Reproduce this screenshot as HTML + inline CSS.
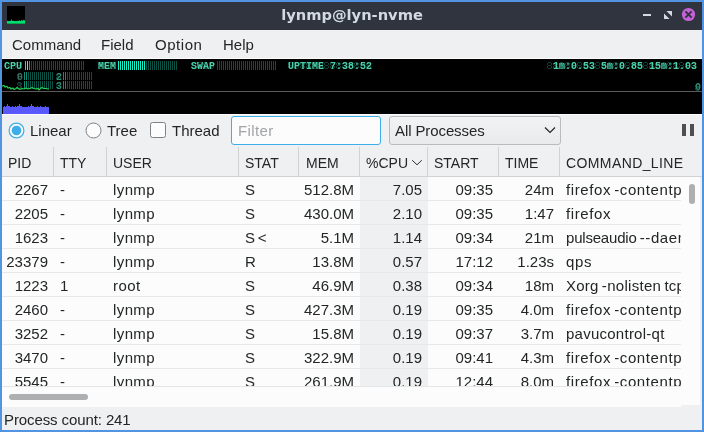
<!DOCTYPE html>
<html><head><meta charset="utf-8"><title>lynmp@lyn-nvme</title>
<style>
html,body{margin:0;padding:0}
body{width:704px;height:432px;overflow:hidden;position:relative;background:#5294e2;font-family:"Liberation Sans",sans-serif;font-size:15px;color:#232627}
.a{position:absolute;white-space:nowrap}
#win{will-change:transform;left:2px;top:2px;width:700px;height:428px;background:#eff0f1;overflow:hidden}
#tb{left:0;top:0;width:700px;height:28px;background:#2f343f}
#ttl{left:0;width:700px;top:3px;text-align:center;font-family:"DejaVu Sans",sans-serif;font-weight:bold;font-size:14.67px;color:#d3dae3;line-height:20px}
.m{top:33px;line-height:20px;font-size:15px}
#info{left:0;top:57px;width:700px;height:55px;background:#000}
.lcd{font-family:"Liberation Mono",monospace;font-size:10px;font-weight:bold;line-height:10px;color:#4ccfa9;white-space:pre}
.dim{color:#2b8c78}.d0{color:#3a6e62}.d1{color:#143a33}.b2{background:repeating-linear-gradient(90deg,#06312a 0 1px,transparent 1px 2px)}.bm{background:repeating-linear-gradient(90deg,#128a74 0 1px,transparent 1px 2px)}
.bars{height:9px;background:repeating-linear-gradient(90deg,#0b4f45 0 1px,transparent 1px 2px)}
.bb{height:9px;background:repeating-linear-gradient(90deg,#14efcb 0 1px,transparent 1px 2px)}
.seg{height:7px;--c:#0b4036;background:
linear-gradient(90deg,transparent 1px,var(--c) 1px 4px,transparent 4px) 0 0/6px 1px repeat-x,
linear-gradient(90deg,transparent 1px,var(--c) 1px 4px,transparent 4px) 0 3px/6px 1px repeat-x,
linear-gradient(90deg,transparent 1px,var(--c) 1px 4px,transparent 4px) 0 6px/6px 1px repeat-x,
linear-gradient(90deg,var(--c) 0 1px,transparent 1px 4px,var(--c) 4px 5px,transparent 5px) 0 1px/6px 2px repeat-x,
linear-gradient(90deg,var(--c) 0 1px,transparent 1px 4px,var(--c) 4px 5px,transparent 5px) 0 4px/6px 2px repeat-x}
.t{line-height:20px}
.hd{top:151px;line-height:20px;font-size:14px}
.sep{top:145px;width:1px;height:29px;background:#d1d2d3}
#body{left:0;top:175px;width:679px;height:209px;background:#fcfcfc;overflow:hidden}
.row{left:0;width:679px;height:23px;border-bottom:1px solid #e7e8e9}
.c{top:3px;line-height:20px}
.r{text-align:right}
</style></head><body>
<div id="win" class="a">
<div id="tb" class="a">
 <div class="a" style="left:5px;top:4px;width:18px;height:18px;background:#000"></div>
 <svg class="a" style="left:5px;top:4px" width="18" height="18" viewBox="0 0 18 18"><path d="M0 17.8V15L1 14.8L2 15.3L3 14.7L4 15L4.6 13L5.2 14.8L6 15.1L7 14.7L8 15.2L9 14.8L10 15.2L11 14.7L11.6 14.9L12.2 13.8L12.8 15L14 14.9L14.8 13.4L15.4 15L16.2 13.6L17 14.8L17.5 13.8L18 14.5V17.8Z" fill="#00e070"/></svg>
 <div id="ttl" class="a">lynmp@lyn-nvme</div>
 <div class="a" style="left:641px;top:12px;width:8px;height:2px;background:#d3dae3"></div>
 <svg class="a" style="left:662px;top:9px" width="8" height="8" viewBox="0 0 8 8"><path d="M2.4 0H8V5.6Z M0 2.4V8H5.6Z" fill="#d3dae3"/></svg>
 <svg class="a" style="left:679px;top:5px" width="15" height="15" viewBox="0 0 15 15"><circle cx="7.5" cy="7.5" r="6.6" fill="#c561d8"/><path d="M4.4 4.4L10.6 10.6M10.6 4.4L4.4 10.6" stroke="#2f343f" stroke-width="2" stroke-linecap="butt"/></svg>
</div>
<div class="a m" style="left:10px">Command</div>
<div class="a m" style="left:99px">Field</div>
<div class="a m" style="left:153px;letter-spacing:0.55px">Option</div>
<div class="a m" style="left:221px">Help</div>
<div class="a" style="left:0;top:56px;width:700px;height:57px;background:#fcfcfc"></div>
<div id="info" class="a">
 <div class="a seg" style="left:3px;top:3px;width:18px"></div>
 <div class="a seg" style="left:96px;top:3px;width:18px"></div>
 <div class="a seg" style="left:189px;top:3px;width:24px"></div>
 <div class="a seg" style="left:286px;top:3px;width:84px"></div>
 <div class="a seg" style="left:545px;top:3px;width:150px"></div>
 <div class="a seg" style="left:15px;top:14px;width:6px"></div>
 <div class="a seg" style="left:15px;top:23px;width:6px"></div>
 <div class="a seg" style="left:54px;top:14px;width:6px"></div>
 <div class="a seg" style="left:54px;top:23px;width:6px"></div>
 <div class="a seg" style="left:693px;top:25px;width:6px"></div>
 <div class="a lcd" style="left:2px;top:3px">CPU</div>
 <div class="a bars" style="left:23px;top:2px;width:60px"></div>
 <div class="a" style="left:23px;top:2px;width:1px;height:9px;background:#14e0c0"></div>
 <div class="a" style="left:25px;top:2px;width:1px;height:9px;background:#20ffd8"></div>
 <div class="a" style="left:27px;top:2px;width:1px;height:9px;background:#16a890"></div>
 <div class="a lcd d0" style="left:15px;top:14px">0</div>
 <div class="a bars b2" style="left:22px;top:13px;width:29px;height:8px"></div>
 <div class="a bm" style="left:22px;top:13px;width:3px;height:8px"></div>
 <div class="a lcd d1" style="left:15px;top:23px">1</div>
 <div class="a bars b2" style="left:22px;top:22px;width:29px;height:8px"></div>
 <div class="a bm" style="left:22px;top:22px;width:3px;height:8px"></div>
 <div class="a lcd dim" style="left:54px;top:14px">2</div>
 <div class="a bars b2" style="left:61px;top:13px;width:29px;height:8px"></div>
 <div class="a bm" style="left:61px;top:13px;width:3px;height:8px"></div>
 <div class="a lcd dim" style="left:54px;top:23px">3</div>
 <div class="a bars b2" style="left:61px;top:22px;width:29px;height:8px"></div>
 <div class="a bm" style="left:61px;top:22px;width:3px;height:8px"></div>
 <div class="a lcd" style="left:96px;top:3px">MEM</div>
 <div class="a bars" style="left:116px;top:2px;width:60px"></div>
 <div class="a bb" style="left:116px;top:2px;width:28px"></div>
 <div class="a lcd" style="left:189px;top:3px">SWAP</div>
 <div class="a bars" style="left:215px;top:2px;width:60px"></div>
 <div class="a lcd" style="left:286px;top:3px">UPTIME 7:38:52</div>
 <div class="a lcd" style="left:545px;top:3px"> 1m:0.53 5m:0.85 15m:1.03</div>
 <div class="a lcd dim" style="left:693px;top:24px">0</div>
 <div class="a" style="left:0;top:32px;width:700px;height:1px;background:#585858"></div>
 <svg class="a" style="left:0;top:0" width="700" height="55" viewBox="0 0 700 55">
  <polyline fill="none" stroke="#22dc58" stroke-width="1.1" points="0,27 2,26.5 3,28 5,27.5 6,29 8,28.5 9,30 11,29 12,30.5 14,29.5 15,28.5 17,30 18,30.5 20,29.5 22,30 24,29 26,30 28,29.5 30,28.5 32,29.5 34,30 36,29.5 37,31 39,29 40,28.5 42,29.5 44,29.5 46,30 47,30"/>
  <g fill="#5858fc" shape-rendering="crispEdges"><rect x="1" y="48" width="46" height="7"/><rect x="5" y="45" width="1" height="3"/><rect x="6" y="47" width="2" height="1"/><rect x="4" y="47" width="1" height="1"/><rect x="17" y="45" width="1" height="3"/><rect x="18" y="47" width="2" height="1"/><rect x="16" y="47" width="1" height="1"/><rect x="29" y="45" width="1" height="3"/><rect x="30" y="47" width="2" height="1"/><rect x="28" y="47" width="1" height="1"/><rect x="2" y="47" width="1" height="1"/><rect x="10" y="47" width="1" height="1"/><rect x="13" y="47" width="1" height="1"/><rect x="15" y="47" width="1" height="1"/><rect x="26" y="47" width="1" height="1"/><rect x="35" y="47" width="1" height="1"/><rect x="38" y="47" width="1" height="1"/><rect x="43" y="47" width="1" height="1"/></g>
 </svg>
</div>


<svg class="a" style="left:5.6px;top:119.5px" width="17" height="17" viewBox="0 0 17 17"><circle cx="8.5" cy="8.5" r="7.4" fill="#fcfcfc" stroke="#3daee9" stroke-width="1.2"/><circle cx="8.5" cy="8.5" r="4.8" fill="#3daee9"/></svg>
<div class="a t" style="left:28px;top:119px">Linear</div>
<svg class="a" style="left:82.5px;top:119.5px" width="17" height="17" viewBox="0 0 17 17"><circle cx="8.5" cy="8.5" r="7.5" fill="#fcfcfc" stroke="#7f8183" stroke-width="1"/></svg>
<div class="a t" style="left:105px;top:119px">Tree</div>
<div class="a" style="left:148px;top:120px;width:14px;height:14px;border:1px solid #7f8183;border-radius:2.5px;background:#fcfcfc"></div>
<div class="a t" style="left:170px;top:119px">Thread</div>
<div class="a" style="left:229px;top:114px;width:148px;height:27px;border:1px solid #3daee9;border-radius:3px;background:#fcfcfc"></div>
<div class="a t" style="left:236px;top:119px;color:#a2a3a5;letter-spacing:0.4px">Filter</div>
<div class="a" style="left:387px;top:114px;width:170px;height:27px;border:1px solid #b9bbbc;border-radius:3px;background:linear-gradient(#f2f3f4,#e9eaeb)"></div>
<div class="a t" style="left:393px;top:119px;letter-spacing:-0.1px">All Processes</div>
<svg class="a" style="left:542px;top:124px" width="12" height="9" viewBox="0 0 12 9"><path d="M1 1.5L6 6.5L11 1.5" fill="none" stroke="#232627" stroke-width="1.2"/></svg>
<div class="a" style="left:680px;top:122px;width:4px;height:12px;background:#4d4f50"></div>
<div class="a" style="left:688px;top:122px;width:4px;height:12px;background:#4d4f50"></div>

<div class="a hd" style="left:6px">PID</div>
<div class="a hd" style="left:58px">TTY</div>
<div class="a hd" style="left:111px">USER</div>
<div class="a hd" style="left:243px">STAT</div>
<div class="a hd" style="left:304px">MEM</div>
<div class="a hd" style="left:364px">%CPU</div>
<div class="a hd" style="left:432px">START</div>
<div class="a hd" style="left:503px">TIME</div>
<div class="a hd" style="left:564px;letter-spacing:0.4px">COMMAND_LINE</div>
<div class="a sep" style="left:51px"></div>
<div class="a sep" style="left:104px"></div>
<div class="a sep" style="left:236px"></div>
<div class="a sep" style="left:296px"></div>
<div class="a sep" style="left:357px"></div>
<div class="a sep" style="left:425px"></div>
<div class="a sep" style="left:496px"></div>
<div class="a sep" style="left:557px"></div>
<svg class="a" style="left:409px;top:157px" width="12" height="8" viewBox="0 0 12 8"><path d="M1.2 1.2L6 5.8L10.8 1.2" fill="none" stroke="#2c2f31" stroke-width="1"/></svg>
<div class="a" style="left:0;top:174px;width:700px;height:1px;background:#d1d2d3"></div>
<div class="a" style="left:0;top:175px;width:698px;height:228px;background:#fcfcfc"></div>
<div class="a" style="left:0;top:384px;width:679px;height:21px;background:#fcfcfc"></div>
<div class="a" style="left:0;top:384px;width:679px;height:1px;background:#e4e5e6"></div>
<div id="body" class="a">
<div class="a" style="left:358px;top:0;width:68px;height:209px;background:#eff0f1"></div>
<div class="a row" style="top:0px"><div class="a c r" style="left:0;width:46px">2267</div><div class="a c" style="left:58px">-</div><div class="a c" style="left:111px;letter-spacing:0.4px">lynmp</div><div class="a c" style="left:243px;word-spacing:-1.5px">S</div><div class="a c r" style="left:296px;width:56px">512.8M</div><div class="a c r" style="left:358px;width:62px">7.05</div><div class="a c r" style="left:430px;width:61px">09:35</div><div class="a c r" style="left:500px;width:52px">24m</div><div class="a c" style="left:564px;word-spacing:-1px"><span style="letter-spacing:0.6px">firefox</span> <span style="letter-spacing:0.6px">-contentp</span></div></div>
<div class="a row" style="top:24px"><div class="a c r" style="left:0;width:46px">2205</div><div class="a c" style="left:58px">-</div><div class="a c" style="left:111px;letter-spacing:0.4px">lynmp</div><div class="a c" style="left:243px;word-spacing:-1.5px">S</div><div class="a c r" style="left:296px;width:56px">430.0M</div><div class="a c r" style="left:358px;width:62px">2.10</div><div class="a c r" style="left:430px;width:61px">09:35</div><div class="a c r" style="left:500px;width:52px">1:47</div><div class="a c" style="left:564px;word-spacing:-1px"><span style="letter-spacing:0.6px">firefox</span></div></div>
<div class="a row" style="top:48px"><div class="a c r" style="left:0;width:46px">1623</div><div class="a c" style="left:58px">-</div><div class="a c" style="left:111px;letter-spacing:0.4px">lynmp</div><div class="a c" style="left:243px;word-spacing:-1.5px">S &lt;</div><div class="a c r" style="left:296px;width:56px">5.1M</div><div class="a c r" style="left:358px;width:62px">1.14</div><div class="a c r" style="left:430px;width:61px">09:34</div><div class="a c r" style="left:500px;width:52px">21m</div><div class="a c" style="left:564px;word-spacing:-1px"><span style="letter-spacing:-0.2px">pulseaudio</span> <span style="letter-spacing:0.6px">--daemonize</span></div></div>
<div class="a row" style="top:72px"><div class="a c r" style="left:0;width:46px">23379</div><div class="a c" style="left:58px">-</div><div class="a c" style="left:111px;letter-spacing:0.4px">lynmp</div><div class="a c" style="left:243px;word-spacing:-1.5px">R</div><div class="a c r" style="left:296px;width:56px">13.8M</div><div class="a c r" style="left:358px;width:62px">0.57</div><div class="a c r" style="left:430px;width:61px">17:12</div><div class="a c r" style="left:500px;width:52px">1.23s</div><div class="a c" style="left:564px;word-spacing:-1px"><span style="letter-spacing:0.6px">qps</span></div></div>
<div class="a row" style="top:96px"><div class="a c r" style="left:0;width:46px">1223</div><div class="a c" style="left:58px">1</div><div class="a c" style="left:111px;letter-spacing:0.4px">root</div><div class="a c" style="left:243px;word-spacing:-1.5px">S</div><div class="a c r" style="left:296px;width:56px">46.9M</div><div class="a c r" style="left:358px;width:62px">0.38</div><div class="a c r" style="left:430px;width:61px">09:34</div><div class="a c r" style="left:500px;width:52px">18m</div><div class="a c" style="left:564px;word-spacing:-1px"><span style="letter-spacing:0.25px">Xorg</span> <span style="letter-spacing:0.3px">-nolisten</span> <span style="letter-spacing:0.25px">tcp</span></div></div>
<div class="a row" style="top:120px"><div class="a c r" style="left:0;width:46px">2460</div><div class="a c" style="left:58px">-</div><div class="a c" style="left:111px;letter-spacing:0.4px">lynmp</div><div class="a c" style="left:243px;word-spacing:-1.5px">S</div><div class="a c r" style="left:296px;width:56px">427.3M</div><div class="a c r" style="left:358px;width:62px">0.19</div><div class="a c r" style="left:430px;width:61px">09:35</div><div class="a c r" style="left:500px;width:52px">4.0m</div><div class="a c" style="left:564px;word-spacing:-1px"><span style="letter-spacing:0.6px">firefox</span> <span style="letter-spacing:0.6px">-contentp</span></div></div>
<div class="a row" style="top:144px"><div class="a c r" style="left:0;width:46px">3252</div><div class="a c" style="left:58px">-</div><div class="a c" style="left:111px;letter-spacing:0.4px">lynmp</div><div class="a c" style="left:243px;word-spacing:-1.5px">S</div><div class="a c r" style="left:296px;width:56px">15.8M</div><div class="a c r" style="left:358px;width:62px">0.19</div><div class="a c r" style="left:430px;width:61px">09:37</div><div class="a c r" style="left:500px;width:52px">3.7m</div><div class="a c" style="left:564px;word-spacing:-1px"><span style="letter-spacing:0.25px">pavucontrol-qt</span></div></div>
<div class="a row" style="top:168px"><div class="a c r" style="left:0;width:46px">3470</div><div class="a c" style="left:58px">-</div><div class="a c" style="left:111px;letter-spacing:0.4px">lynmp</div><div class="a c" style="left:243px;word-spacing:-1.5px">S</div><div class="a c r" style="left:296px;width:56px">322.9M</div><div class="a c r" style="left:358px;width:62px">0.19</div><div class="a c r" style="left:430px;width:61px">09:41</div><div class="a c r" style="left:500px;width:52px">4.3m</div><div class="a c" style="left:564px;word-spacing:-1px"><span style="letter-spacing:0.6px">firefox</span> <span style="letter-spacing:0.6px">-contentp</span></div></div>
<div class="a row" style="top:192px"><div class="a c r" style="left:0;width:46px">5545</div><div class="a c" style="left:58px">-</div><div class="a c" style="left:111px;letter-spacing:0.4px">lynmp</div><div class="a c" style="left:243px;word-spacing:-1.5px">S</div><div class="a c r" style="left:296px;width:56px">261.9M</div><div class="a c r" style="left:358px;width:62px">0.19</div><div class="a c r" style="left:430px;width:61px">12:44</div><div class="a c r" style="left:500px;width:52px">8.0m</div><div class="a c" style="left:564px;word-spacing:-1px"><span style="letter-spacing:0.6px">firefox</span> <span style="letter-spacing:0.6px">-contentp</span></div></div>
</div>
<div class="a" style="left:687px;top:182px;width:6px;height:20px;border-radius:3px;background:#aeafb0"></div>
<div class="a" style="left:7px;top:392px;width:79px;height:6px;border-radius:3px;background:#aeafb0"></div>
<div class="a" style="left:0;top:405px;width:700px;height:23px;background:#eff0f1"></div>
<div class="a t" style="left:2px;top:408px;letter-spacing:-0.1px">Process count: 241</div>
</div></body></html>
